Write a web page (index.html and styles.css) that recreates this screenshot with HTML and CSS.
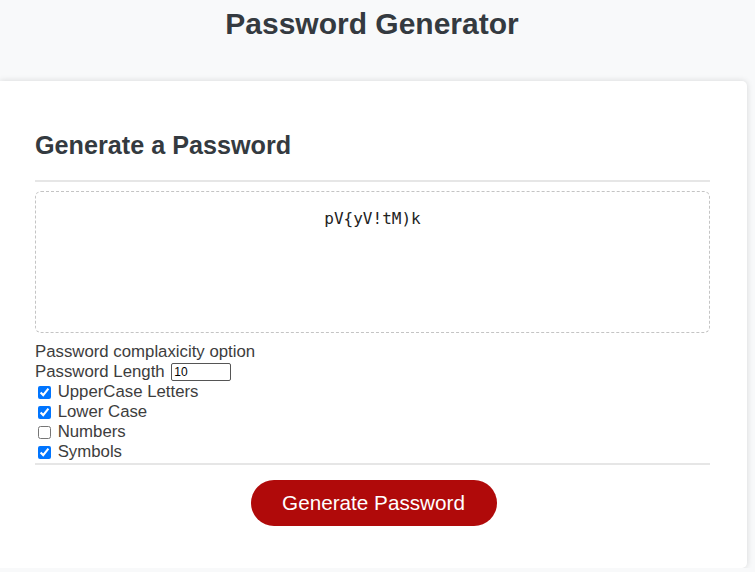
FILE: index.html
```html
<!DOCTYPE html>
<html>
<head>
<meta charset="utf-8">
<title>Password Generator</title>
<link rel="stylesheet" href="styles.css">
</head>
<body>
<header class="page-header">
  <h1 class="page-title">Password Generator</h1>
</header>
<main class="card">
  <h2 class="card-title">Generate a Password</h2>
  <div class="rule"></div>
  <div class="output">pV{yV!tM)k</div>
  <div class="options">
    <div class="opt-line">Password complaxicity option</div>
    <div class="opt-line">Password Length <input class="len-input" type="text" value="10"></div>
    <label class="opt-line"><input type="checkbox" checked> UpperCase Letters</label>
    <label class="opt-line"><input type="checkbox" checked> Lower Case</label>
    <label class="opt-line"><input type="checkbox"> Numbers</label>
    <label class="opt-line"><input type="checkbox" checked> Symbols</label>
  </div>
  <div class="rule rule-bottom"></div>
  <div class="actions">
    <button class="gen-btn" type="button">Generate Password</button>
  </div>
</main>
</body>
</html>
```
FILE: styles.css
```css
html, body {
  margin: 0;
  padding: 0;
}
body {
  background: #f8f9fa;
  font-family: "Liberation Sans", Arial, sans-serif;
  color: #343a40;
}
.page-header {
  height: 81px;
  box-sizing: border-box;
  padding-top: 6px;
}
.page-title {
  margin: 0;
  text-align: center;
  font-size: 30px;
  line-height: 36px;
  font-weight: bold;
  color: #343a40;
  padding-right: 11px;
}
.card {
  width: 747px;
  box-sizing: border-box;
  background: #fff;
  border-radius: 0 5px 5px 0;
  box-shadow: 0 0 6px rgba(0, 0, 0, 0.14);
  padding: 50px 37px 42px 35px;
}
.card-title {
  margin: 0 0 21px 0;
  font-size: 25.2px;
  line-height: 28px;
  font-weight: bold;
  color: #343a40;
}
.rule {
  height: 2px;
  background: #e6e6e6;
}
.output {
  margin-top: 9px;
  height: 142px;
  box-sizing: border-box;
  border: 1px dashed #c4c4c4;
  border-radius: 6px;
  padding-top: 17px;
  text-align: center;
  font-family: "DejaVu Sans Mono", "Liberation Mono", monospace;
  font-size: 16px;
  line-height: 20px;
  color: #222;
}
.options {
  margin-top: 8px;
  font-size: 16.8px;
  color: #3d3d3d;
}
.opt-line {
  display: flex;
  align-items: center;
  height: 20px;
  padding-top: 1px;
  margin-bottom: -1px;
  white-space: pre;
}
.opt-line input[type="checkbox"] {
  width: 13px;
  height: 13px;
  margin: 0 2px 0 3px;
}
.len-input {
  width: 60px;
  height: 18px;
  box-sizing: border-box;
  margin: 0 0 0 2px;
  padding: 0 2px;
  border: 1px solid #555;
  border-radius: 2px;
  font-family: "Liberation Sans", Arial, sans-serif;
  font-size: 12px;
  color: #000;
}
.rule-bottom {
  margin-top: 2px;
}
.actions {
  display: flex;
  justify-content: center;
  margin-top: 15px;
  padding-left: 2px;
}
.gen-btn {
  width: 246px;
  height: 46px;
  border: none;
  border-radius: 23px;
  background: #b00a0a;
  color: #fff;
  font-family: "Liberation Sans", Arial, sans-serif;
  font-size: 20.7px;
  padding: 0;
}
```
